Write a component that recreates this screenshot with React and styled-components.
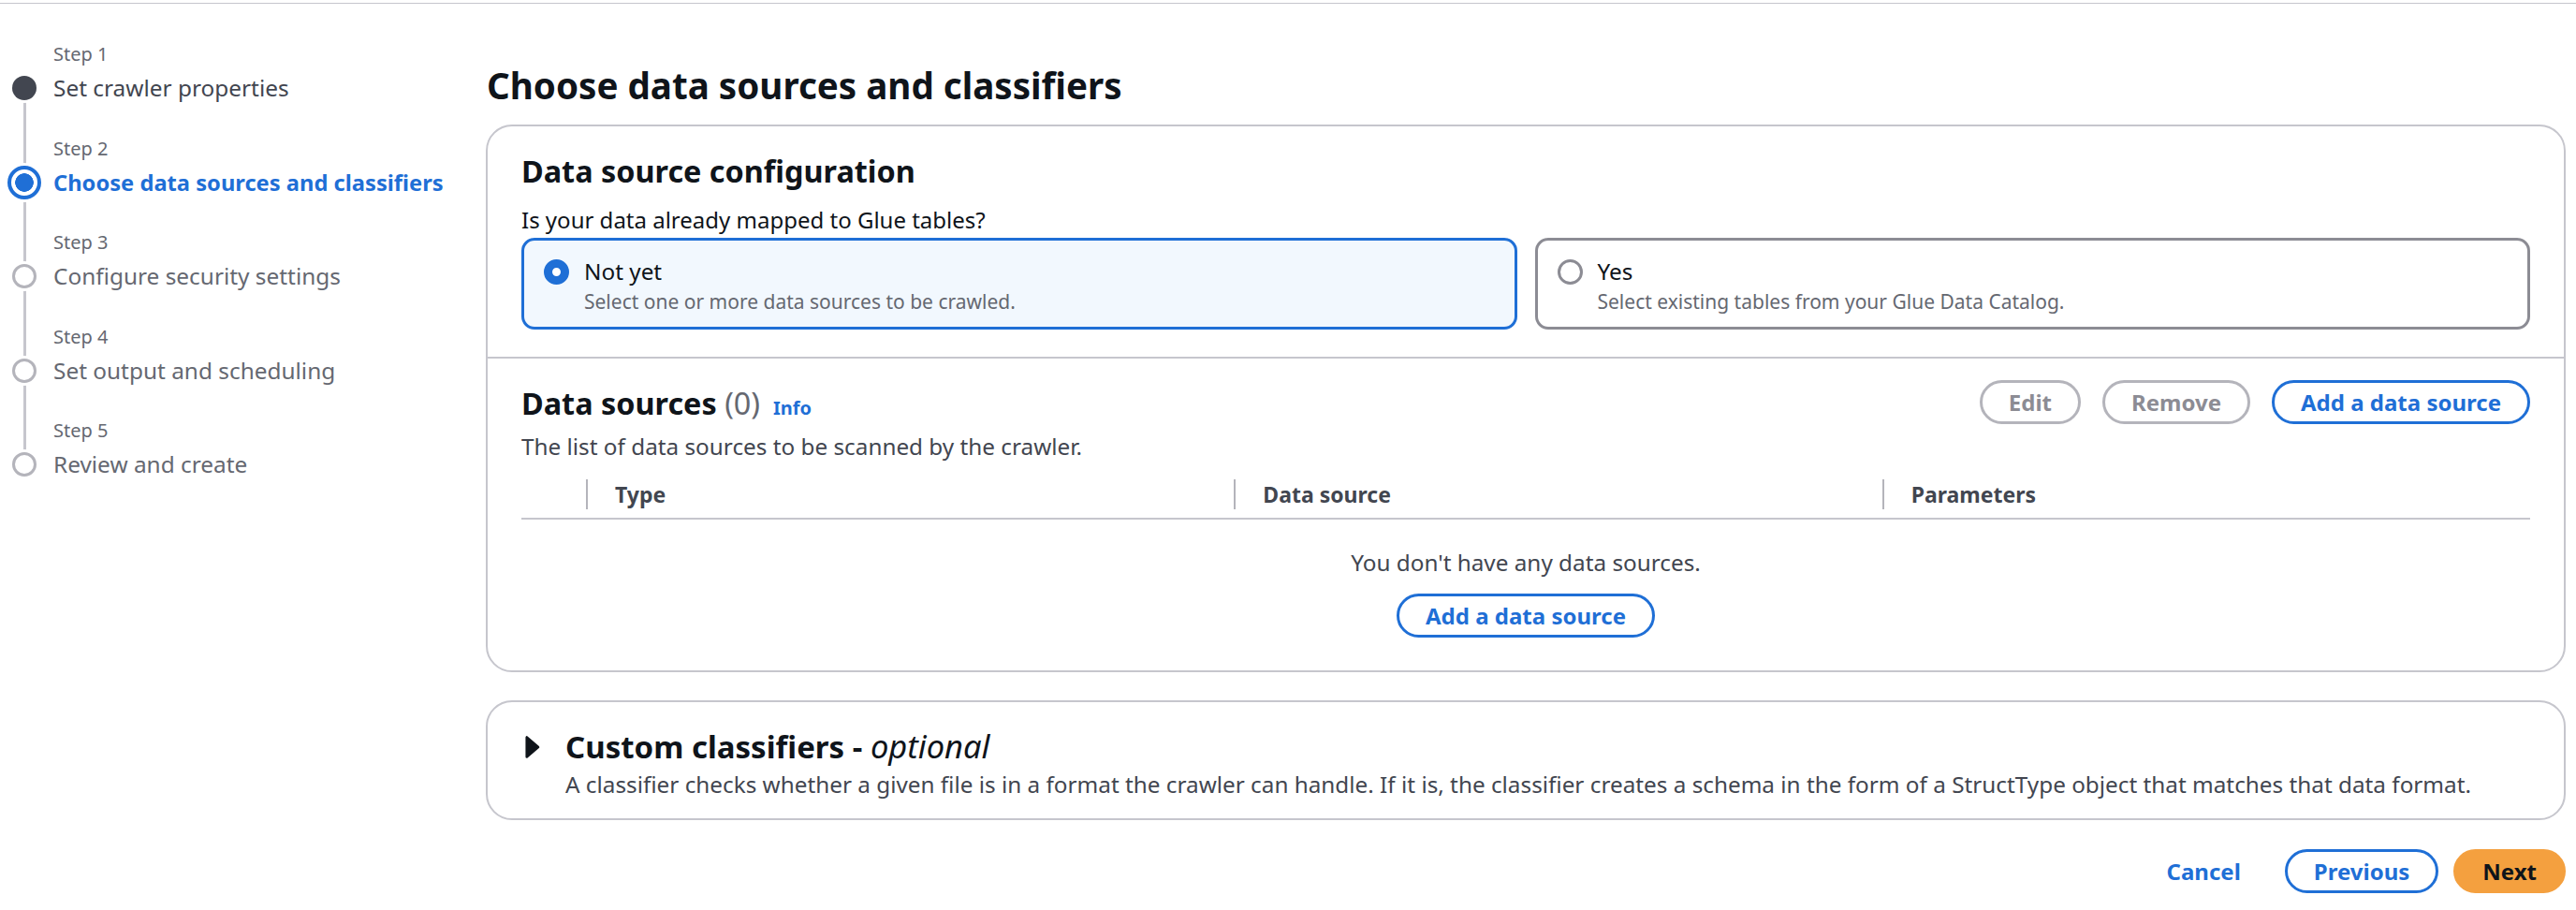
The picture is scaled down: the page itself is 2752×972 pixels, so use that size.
import React from "react";
import styled, { createGlobalStyle, css } from "styled-components";

const C = {
  text: "#0f141a",
  body: "#424650",
  secondary: "#656871",
  border: "#c6c6cd",
  rail: "#c6c6cd",
  blue: "#1f6fd6",
  disabledBorder: "#b4b4bb",
  disabledText: "#8c8c94",
  tileBorder: "#8c8c94",
  tileSelectedBg: "#f2f8fe",
  orange: "#f4a03f",
  done: "#424650",
};

const Global = createGlobalStyle`
  html, body { margin: 0; padding: 0; background: #ffffff; }
  body {
    font-family: "Noto Sans", "Open Sans", "DejaVu Sans", sans-serif;
    color: ${C.text};
    -webkit-font-smoothing: antialiased;
  }
  *, *::before, *::after { box-sizing: border-box; }
  ul { margin: 0; padding: 0; list-style: none; }
  h1, h2, p { margin: 0; }
  button { font-family: inherit; }
`;

const Shell = styled.div`
  padding-top: 3px;
`;

const Page = styled.div`
  width: 2752px;
  min-height: 969px;
  border-top: 1px solid ${C.border};
  display: flex;
`;

/* ---------- Sidebar / wizard navigation ---------- */

const Sidebar = styled.nav`
  width: 519px;
  flex: none;
  padding-top: 40px;
`;

const StepItem = styled.li`
  display: flex;
`;

const Rail = styled.div`
  width: 52px;
  flex: none;
  display: flex;
  flex-direction: column;
  align-items: center;
  padding-top: 33px;
  background-image: linear-gradient(${C.rail}, ${C.rail});
  background-repeat: no-repeat;
  background-size: 3px
    ${(p) => (p.$first ? "calc(100% - 50px)" : p.$last ? "50px" : "100%")};
  background-position: ${(p) => (p.$first ? "center 50px" : "center top")};
`;

const MarkerCell = styled.div`
  height: 34px;
  display: flex;
  align-items: center;
  justify-content: center;
`;

const Marker = styled.span`
  display: block;
  flex: none;
  border-radius: 50%;
  box-shadow: 0 0 0 3px #ffffff;
  ${(p) =>
    p.$state === "done" &&
    css`
      width: 26px;
      height: 26px;
      background: ${C.done};
    `}
  ${(p) =>
    p.$state === "current" &&
    css`
      width: 36px;
      height: 36px;
      border: 4px solid ${C.blue};
      background: radial-gradient(circle, ${C.blue} 0 9.5px, #ffffff 10.1px);
    `}
  ${(p) =>
    p.$state === "todo" &&
    css`
      width: 26px;
      height: 26px;
      border: 3px solid ${C.disabledBorder};
      background: #ffffff;
    `}
`;

const StepText = styled.div`
  display: flex;
  flex-direction: column;
  padding-left: 5px;
  padding-bottom: ${(p) => (p.$last ? "0" : "33.5px")};
`;

const StepLabel = styled.span`
  font-size: 20px;
  line-height: 28px;
  color: ${C.secondary};
`;

const StepTitle = styled.span`
  margin-top: 5px;
  font-size: ${(p) => (p.$state === "current" ? "23.7px" : "24.4px")};
  line-height: 34px;
  white-space: nowrap;
  color: ${(p) =>
    p.$state === "current" ? C.blue : p.$state === "done" ? C.done : C.secondary};
  font-weight: ${(p) => (p.$state === "current" ? 700 : 400)};
`;

/* ---------- Main content ---------- */

const Main = styled.main`
  flex: 1;
  min-width: 0;
  padding: 62px 11px 0 0;
`;

const PageTitle = styled.h1`
  font-size: 38.6px;
  line-height: 50px;
  font-weight: 700;
  color: ${C.text};
  margin: 0 0 17px 1px;
`;

const Container = styled.section`
  border: 2px solid ${C.border};
  border-radius: 28px;
  background: #ffffff;
  & + & {
    margin-top: 30px;
  }
`;

const Section = styled.div`
  padding: ${(p) => p.$pad};
  & + & {
    border-top: 2px solid ${C.border};
  }
`;

const H2 = styled.h2`
  font-size: 32.4px;
  line-height: 42px;
  font-weight: 700;
  color: ${C.text};
  white-space: nowrap;
`;

const Counter = styled.span`
  font-weight: 400;
  color: ${C.secondary};
`;

const FieldLabel = styled.p`
  margin-top: 16px;
  font-size: 24px;
  line-height: 32px;
  color: ${C.text};
`;

const Tiles = styled.div`
  margin-top: 3px;
  display: grid;
  grid-template-columns: 1fr 1fr;
  gap: 19px;
`;

const Tile = styled.label`
  display: flex;
  gap: 16px;
  padding: 17px 21px 13px;
  border: 3px solid ${(p) => (p.$selected ? C.blue : C.tileBorder)};
  border-radius: 14px;
  background: ${(p) => (p.$selected ? C.tileSelectedBg : "#ffffff")};
`;

const Radio = styled.span`
  flex: none;
  width: 27px;
  height: 27px;
  margin-top: 2.5px;
  border-radius: 50%;
  background: #ffffff;
  border: ${(p) => (p.$checked ? `9px solid ${C.blue}` : `3px solid ${C.tileBorder}`)};
`;

const TileBody = styled.div`
  display: flex;
  flex-direction: column;
`;

const TileTitle = styled.span`
  font-size: 24.3px;
  line-height: 32px;
  color: ${C.text};
`;

const TileDesc = styled.span`
  margin-top: 2px;
  font-size: 21px;
  line-height: 28px;
  color: ${C.secondary};
`;

const HeaderTop = styled.div`
  height: 47px;
  display: flex;
  align-items: center;
  justify-content: space-between;
`;

const HeadingGroup = styled.div`
  display: flex;
  align-items: baseline;
`;

const InfoLink = styled.a`
  margin-left: 14px;
  font-size: 20px;
  font-weight: 700;
  color: ${C.blue};
  text-decoration: none;
`;

const Actions = styled.div`
  display: flex;
  align-items: center;
  gap: ${(p) => p.$gap || "23px"};
`;

const Button = styled.button`
  height: 47px;
  padding: 8px 28px;
  border-radius: 999px;
  font-size: 24px;
  line-height: 25px;
  font-weight: 700;
  white-space: nowrap;
  cursor: pointer;
  border: 3px solid transparent;
  background: #ffffff;
  ${(p) =>
    p.$variant === "normal" &&
    css`
      border-color: ${C.blue};
      color: ${C.blue};
    `}
  ${(p) =>
    p.$variant === "disabled" &&
    css`
      border-color: ${C.disabledBorder};
      color: ${C.disabledText};
      cursor: default;
    `}
  ${(p) =>
    p.$variant === "link" &&
    css`
      background: transparent;
      color: ${C.blue};
    `}
  ${(p) =>
    p.$variant === "primary" &&
    css`
      background: ${C.orange};
      border-color: ${C.orange};
      color: ${C.text};
    `}
`;

const Description = styled.p`
  margin-top: 8px;
  font-size: 24.3px;
  line-height: 32px;
  color: ${C.body};
`;

const Table = styled.div`
  margin-top: 10px;
`;

const TableHead = styled.div`
  display: grid;
  grid-template-columns: 69px repeat(3, 1fr);
  height: 52px;
  border-bottom: 2px solid ${C.border};
`;

const HeadCell = styled.div`
  display: flex;
  align-items: center;
  font-size: 23px;
  font-weight: 700;
  color: ${C.body};
  white-space: nowrap;
  ${(p) =>
    !p.$blank &&
    css`
      &::before {
        content: "";
        flex: none;
        width: 2px;
        height: 32px;
        margin-right: 29px;
        background: ${C.disabledBorder};
      }
    `}
`;

const Empty = styled.div`
  padding-top: 30px;
  display: flex;
  flex-direction: column;
  align-items: center;
  gap: 17px;
`;

const EmptyText = styled.p`
  font-size: 24.3px;
  line-height: 32px;
  color: ${C.body};
`;

const ExpandHeader = styled.div`
  display: flex;
  align-items: center;
  gap: 22px;
`;

const Caret = styled.svg`
  flex: none;
  width: 28px;
  height: 28px;
  color: ${C.text};
`;

const ExpandTitle = styled.h2`
  font-size: 33px;
  line-height: 42px;
  font-weight: 700;
  color: ${C.text};
  white-space: nowrap;
  em {
    font-weight: 400;
    font-style: italic;
    font-size: 34.5px;
  }
`;

const ExpandDesc = styled.p`
  margin: 3px 0 0 50px;
  font-size: 24.3px;
  line-height: 32px;
  color: ${C.body};
`;

const Footer = styled.div`
  margin-top: 31px;
  display: flex;
  justify-content: flex-end;
`;

const steps = [
  { label: "Step 1", title: "Set crawler properties", state: "done" },
  { label: "Step 2", title: "Choose data sources and classifiers", state: "current" },
  { label: "Step 3", title: "Configure security settings", state: "todo" },
  { label: "Step 4", title: "Set output and scheduling", state: "todo" },
  { label: "Step 5", title: "Review and create", state: "todo" },
];

export default function App() {
  return (
    <Shell>
      <Global />
      <Page>
        <Sidebar>
          <ul>
            {steps.map((s, i) => {
              const last = i === steps.length - 1;
              return (
                <StepItem key={s.label}>
                  <Rail $first={i === 0} $last={last}>
                    <MarkerCell>
                      <Marker $state={s.state} />
                    </MarkerCell>
                  </Rail>
                  <StepText $last={last}>
                    <StepLabel>{s.label}</StepLabel>
                    <StepTitle $state={s.state}>{s.title}</StepTitle>
                  </StepText>
                </StepItem>
              );
            })}
          </ul>
        </Sidebar>

        <Main>
          <PageTitle>Choose data sources and classifiers</PageTitle>

          <Container>
            <Section $pad="26px 36px 29px">
              <H2>Data source configuration</H2>
              <FieldLabel>Is your data already mapped to Glue tables?</FieldLabel>
              <Tiles>
                <Tile $selected>
                  <Radio $checked />
                  <TileBody>
                    <TileTitle>Not yet</TileTitle>
                    <TileDesc>Select one or more data sources to be crawled.</TileDesc>
                  </TileBody>
                </Tile>
                <Tile>
                  <Radio />
                  <TileBody>
                    <TileTitle>Yes</TileTitle>
                    <TileDesc>Select existing tables from your Glue Data Catalog.</TileDesc>
                  </TileBody>
                </Tile>
              </Tiles>
            </Section>

            <Section $pad="23px 36px 35px">
              <HeaderTop>
                <HeadingGroup>
                  <H2>
                    Data sources <Counter>(0)</Counter>
                  </H2>
                  <InfoLink href="#">Info</InfoLink>
                </HeadingGroup>
                <Actions>
                  <Button $variant="disabled">Edit</Button>
                  <Button $variant="disabled">Remove</Button>
                  <Button $variant="normal">Add a data source</Button>
                </Actions>
              </HeaderTop>
              <Description>The list of data sources to be scanned by the crawler.</Description>
              <Table>
                <TableHead>
                  <HeadCell $blank />
                  <HeadCell>Type</HeadCell>
                  <HeadCell>Data source</HeadCell>
                  <HeadCell>Parameters</HeadCell>
                </TableHead>
                <Empty>
                  <EmptyText>You don't have any data sources.</EmptyText>
                  <Button $variant="normal">Add a data source</Button>
                </Empty>
              </Table>
            </Section>
          </Container>

          <Container>
            <Section $pad="26px 36px 20px 33px">
              <ExpandHeader>
                <Caret viewBox="0 0 16 16" aria-hidden="true">
                  <path
                    d="M5 2v12l7-6-7-6z"
                    fill="currentColor"
                    stroke="currentColor"
                    strokeWidth="1.5"
                    strokeLinejoin="round"
                  />
                </Caret>
                <ExpandTitle>
                  Custom classifiers - <em>optional</em>
                </ExpandTitle>
              </ExpandHeader>
              <ExpandDesc>
                A classifier checks whether a given file is in a format the crawler can handle. If it
                is, the classifier creates a schema in the form of a StructType object that matches
                that data format.
              </ExpandDesc>
            </Section>
          </Container>

          <Footer>
            <Actions $gap="16px">
              <Button $variant="link">Cancel</Button>
              <Button $variant="normal">Previous</Button>
              <Button $variant="primary">Next</Button>
            </Actions>
          </Footer>
        </Main>
      </Page>
    </Shell>
  );
}
